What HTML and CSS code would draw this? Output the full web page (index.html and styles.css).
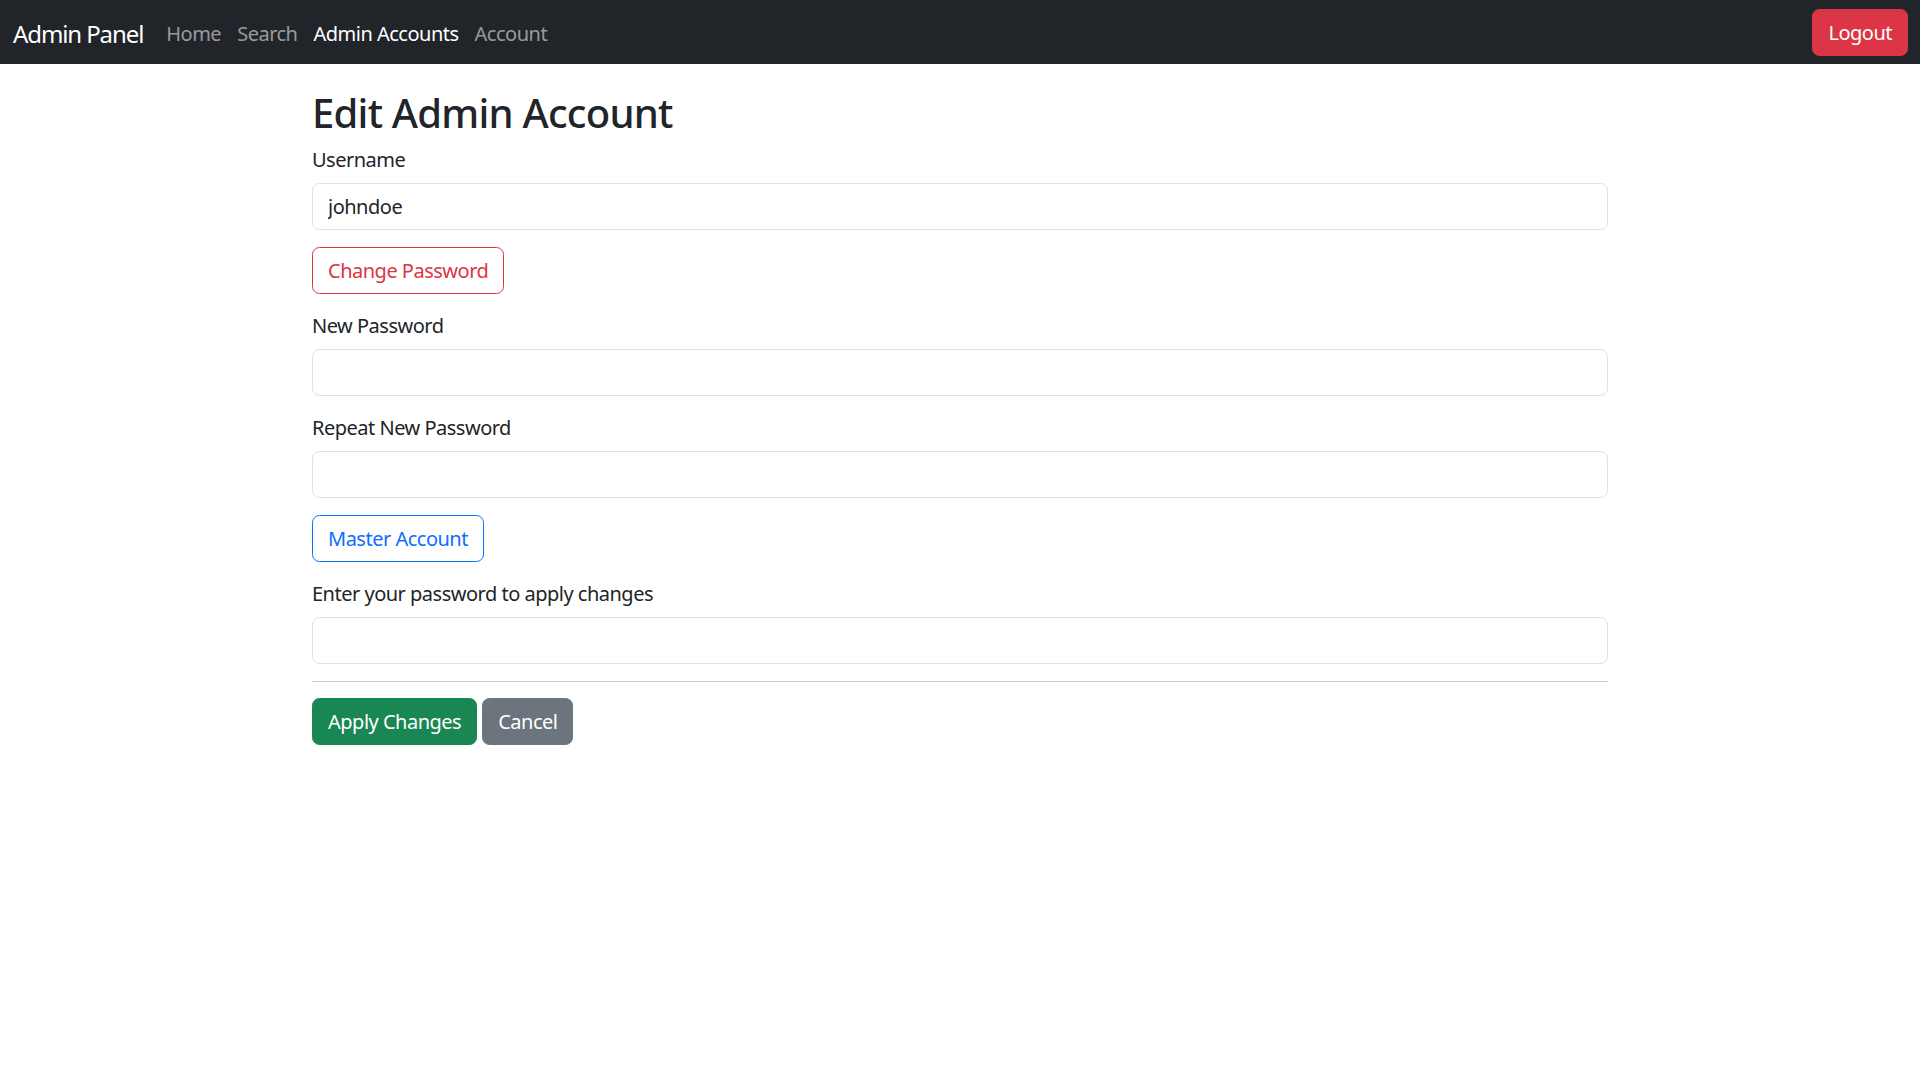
FILE: index.html
```html
<!DOCTYPE html>
<html lang="en">
<head>
<meta charset="utf-8">
<title>Edit Admin Account</title>
<link rel="stylesheet" href="styles.css">
</head>
<body>
<nav class="navbar">
  <div class="nav-inner">
    <a class="brand" href="#">Admin Panel</a>
    <ul class="nav-links">
      <li><a class="nav-link" href="#">Home</a></li>
      <li><a class="nav-link" href="#">Search</a></li>
      <li><a class="nav-link active" href="#">Admin Accounts</a></li>
      <li><a class="nav-link" href="#">Account</a></li>
    </ul>
    <button class="btn btn-danger btn-logout" type="button">Logout</button>
  </div>
</nav>
<main class="container">
  <h2 class="page-title">Edit Admin Account</h2>
  <form class="edit-form">
    <div class="field">
      <label class="form-label" for="username">Username</label>
      <input class="form-control" id="username" type="text" value="johndoe">
    </div>
    <div class="row-btn">
      <button class="btn btn-outline-danger" type="button">Change Password</button>
    </div>
    <div class="field">
      <label class="form-label" for="newpw">New Password</label>
      <input class="form-control" id="newpw" type="password">
    </div>
    <div class="field">
      <label class="form-label" for="repeatpw">Repeat New Password</label>
      <input class="form-control" id="repeatpw" type="password">
    </div>
    <div class="row-btn">
      <button class="btn btn-outline-primary" type="button">Master Account</button>
    </div>
    <div class="field">
      <label class="form-label" for="curpw">Enter your password to apply changes</label>
      <input class="form-control" id="curpw" type="password">
    </div>
    <hr class="divider">
    <div class="actions">
      <button class="btn btn-success" type="submit">Apply Changes</button>
      <button class="btn btn-secondary" type="button">Cancel</button>
    </div>
  </form>
</main>
</body>
</html>
```
FILE: styles.css
```css
* { box-sizing: border-box; }

html, body {
  margin: 0;
  padding: 0;
  background: #fff;
}

body {
  font-family: "Noto Sans", "Open Sans", "Liberation Sans", sans-serif;
  font-size: 20px;
  line-height: 30px;
  letter-spacing: -0.5px;
  color: #212529;
}

.navbar {
  background: #212529;
  height: 64px;
}

.nav-inner {
  display: flex;
  align-items: center;
  height: 64px;
  padding: 0 12px 0 13px;
}

.brand {
  color: #fff;
  text-decoration: none;
  font-size: 24px;
  line-height: 36px;
  letter-spacing: -1.1px;
  margin-right: 15px;
  padding-top: 3px;
}

.nav-links {
  display: flex;
  list-style: none;
  margin: 0;
  padding: 0;
}

.nav-link {
  display: block;
  padding: 3px 8px 0;
  color: rgba(255, 255, 255, 0.55);
  text-decoration: none;
  font-size: 20px;
  line-height: 30px;
}

.nav-link.active {
  color: #fff;
}

.btn {
  display: inline-flex;
  align-items: center;
  justify-content: center;
  height: 47px;
  padding: 0 15px;
  font-family: inherit;
  font-size: 20px;
  line-height: 30px;
  letter-spacing: -0.5px;
  border: 1px solid transparent;
  border-radius: 7.5px;
  background: transparent;
  cursor: pointer;
}

.btn-logout {
  margin-left: auto;
  padding-top: 2px;
}

.btn-danger {
  background: #dc3545;
  border-color: #dc3545;
  color: #fff;
}

.btn-outline-danger {
  border-color: #dc3545;
  color: #dc3545;
}

.btn-outline-primary {
  border-color: #0d6efd;
  color: #0d6efd;
}

.btn-success {
  background: #198754;
  border-color: #198754;
  color: #fff;
}

.btn-secondary {
  background: #6c757d;
  border-color: #6c757d;
  color: #fff;
}

.container {
  width: 1296px;
  margin: 0 auto;
  padding-top: 25px;
}

.page-title {
  margin: 0 0 8px;
  font-size: 40px;
  line-height: 48px;
  font-weight: 500;
  letter-spacing: -0.75px;
}

.edit-form {
  display: flex;
  flex-direction: column;
}

.field {
  display: flex;
  flex-direction: column;
  margin-bottom: 17px;
}

.form-label {
  display: block;
  margin-bottom: 8px;
}

.form-control {
  display: block;
  width: 100%;
  height: 47px;
  padding: 0 15px;
  font-family: inherit;
  font-size: 20px;
  letter-spacing: -0.5px;
  color: #212529;
  background: #fff;
  border: 1px solid #dee2e6;
  border-radius: 7.5px;
}

.row-btn {
  margin-bottom: 17px;
}

.divider {
  width: 100%;
  margin: 0 0 16px;
  border: 0;
  border-top: 1px solid #212529;
  opacity: 0.25;
}

.actions {
  display: flex;
  gap: 5px;
}
```
